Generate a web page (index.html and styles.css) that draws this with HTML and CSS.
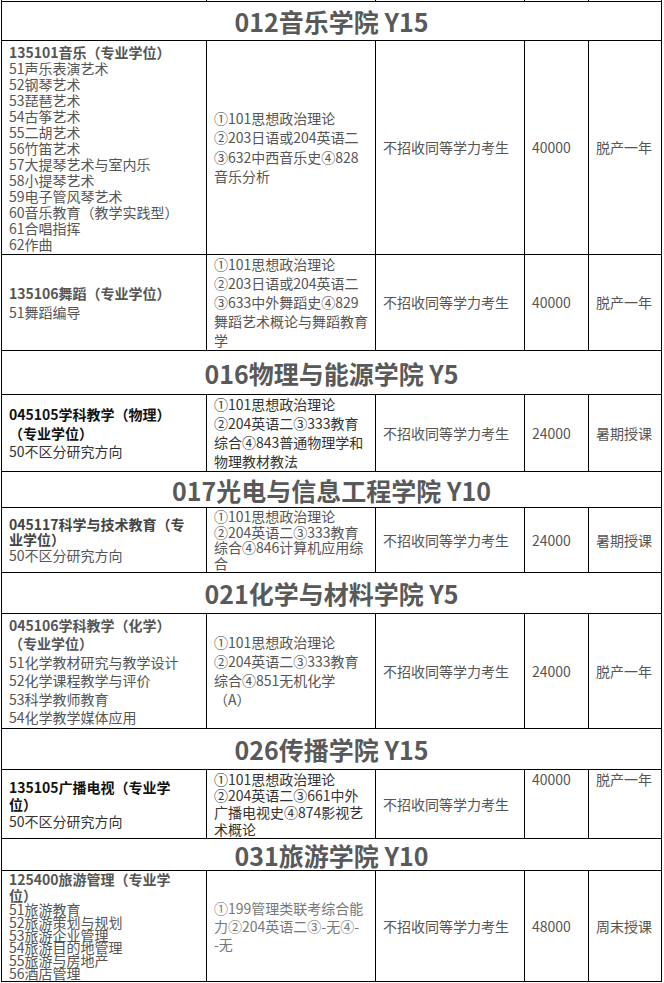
FILE: index.html
```html
<!DOCTYPE html>
<html lang="zh-CN">
<head>
<meta charset="utf-8">
<title>招生目录</title>
<link rel="stylesheet" href="styles.css">
</head>
<body>
<div class="sheet">
  <div class="c"></div><div class="c"></div><div class="c"></div><div class="c"></div><div class="c"></div>

  <div class="h">012音乐学院 Y15</div>

  <div class="c lh16"><b>135101音乐（专业学位）</b>51声乐表演艺术<br>52钢琴艺术<br>53琵琶艺术<br>54古筝艺术<br>55二胡艺术<br>56竹笛艺术<br>57大提琴艺术与室内乐<br>58小提琴艺术<br>59电子管风琴艺术<br>60音乐教育（教学实践型）<br>61合唱指挥<br>62作曲</div>
  <div class="c lh195">①101思想政治理论<br>②203日语或204英语二<br>③632中西音乐史④828<br>音乐分析</div>
  <div class="c">不招收同等学力考生</div>
  <div class="c">40000</div>
  <div class="c">脱产一年</div>

  <div class="c lh19"><b>135106舞蹈（专业学位）</b>51舞蹈编导</div>
  <div class="c lh19">①101思想政治理论<br>②203日语或204英语二<br>③633中外舞蹈史④829<br>舞蹈艺术概论与舞蹈教育<br>学</div>
  <div class="c">不招收同等学力考生</div>
  <div class="c">40000</div>
  <div class="c">脱产一年</div>

  <div class="h">016物理与能源学院 Y5</div>

  <div class="c lh185 dark"><b class="ink">045105学科教学（物理）<br>（专业学位）</b>50不区分研究方向</div>
  <div class="c lh19 dark">①101思想政治理论<br>②204英语二③333教育<br>综合④843普通物理学和<br>物理教材教法</div>
  <div class="c">不招收同等学力考生</div>
  <div class="c">24000</div>
  <div class="c">暑期授课</div>

  <div class="h">017光电与信息工程学院 Y10</div>

  <div class="c lh155"><b class="mid">045117科学与技术教育（专<br>业学位）</b>50不区分研究方向</div>
  <div class="c lh155">①101思想政治理论<br>②204英语二③333教育<br>综合④846计算机应用综<br>合</div>
  <div class="c">不招收同等学力考生</div>
  <div class="c">24000</div>
  <div class="c">暑期授课</div>

  <div class="h">021化学与材料学院 Y5</div>

  <div class="c lh185"><b>045106学科教学（化学）<br>（专业学位）</b>51化学教材研究与教学设计<br>52化学课程教学与评价<br>53科学教师教育<br>54化学教学媒体应用</div>
  <div class="c lh19">①101思想政治理论<br>②204英语二③333教育<br>综合④851无机化学<br>（A）</div>
  <div class="c">不招收同等学力考生</div>
  <div class="c">24000</div>
  <div class="c">脱产一年</div>

  <div class="h">026传播学院 Y15</div>

  <div class="c lh17 dark"><b class="ink">135105广播电视（专业学<br>位）</b>50不区分研究方向</div>
  <div class="c lh167 dark">①101思想政治理论<br>②204英语二③661中外<br>广播电视史④874影视艺<br>术概论</div>
  <div class="c">不招收同等学力考生</div>
  <div class="c top lh167 nudge">40000</div>
  <div class="c top lh167 nudge">脱产一年</div>

  <div class="h">031旅游学院 Y10</div>

  <div class="c top">
    <div class="lh16"><b>125400旅游管理（专业学<br>位）</b></div>
    <div class="tight">51旅游教育<br>52旅游策划与规划<br>53旅游企业管理<br>54旅游目的地管理<br>55旅游与房地产<br>56酒店管理</div>
  </div>
  <div class="c lh183 light">①199管理类联考综合能<br>力②204英语二③-无④-<br>-无</div>
  <div class="c">不招收同等学力考生</div>
  <div class="c">48000</div>
  <div class="c">周末授课</div>
</div>
</body>
</html>
```
FILE: styles.css
```css
html, body {
  margin: 0;
  padding: 0;
  background: #fff;
}

body {
  font-family: "Noto Sans CJK SC", "Noto Sans", sans-serif;
}

.sheet {
  display: grid;
  grid-template-columns: 204px 168px 148px 63px 72px;
  grid-template-rows: 1px 38px 213px 95px 43px 76px 35px 64px 40px 114px 40px 68px 31px 110px;
  gap: 1px;
  background: #000;
  padding: 0 1px 1px 1px;
  margin-left: 1px;
  width: fit-content;
}

.c {
  background: #fff;
  display: flex;
  flex-direction: column;
  justify-content: center;
  padding: 0 6px 0 7px;
  font-size: 14px;
  line-height: 19px;
  color: #555;
  white-space: nowrap;
  overflow: hidden;
}

.c b {
  display: block;
  font-weight: bold;
}

.c.top {
  justify-content: flex-start;
}

.c.nudge {
  padding-top: 1px;
}

.h {
  grid-column: 1 / -1;
  background: #fff;
  display: flex;
  align-items: center;
  justify-content: center;
  font-size: 25px;
  font-weight: bold;
  color: #595959;
  white-space: nowrap;
  overflow: hidden;
}

.lh16 { line-height: 16px; }
.lh155 { line-height: 15.5px; }
.lh167 { line-height: 16.7px; }
.lh17 { line-height: 17px; }
.lh183 { line-height: 18.3px; }
.lh185 { line-height: 18.5px; }
.lh19 { line-height: 19px; }
.lh195 { line-height: 19.5px; }

.tight {
  line-height: 12.8px;
}

.dark { color: #333; }
.ink { color: #111; }
.mid { color: #444; }
.light { color: #777; }
```
